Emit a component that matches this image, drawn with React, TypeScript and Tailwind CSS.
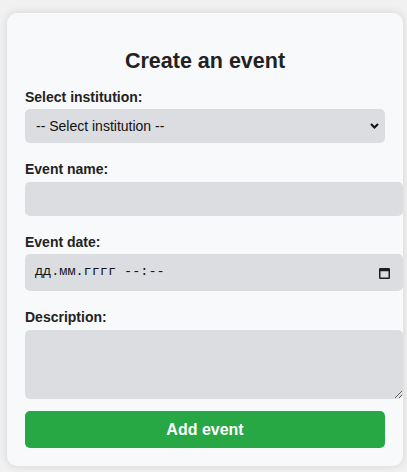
import { useState } from "react";

const CalendarIcon = () => (
  <svg width="11" height="12" viewBox="0 0 11 12" fill="none">
    <rect x="0.75" y="1.75" width="9.5" height="9.5" rx="0.5" stroke="#1f1f1f" strokeWidth="1.5" />
    <rect x="0.75" y="1.75" width="9.5" height="2.5" fill="#1f1f1f" />
  </svg>
);

const Chevron = () => (
  <svg width="9" height="6" viewBox="0 0 9 6" fill="none">
    <path d="M1 1l3.5 3.5L8 1" stroke="#111" strokeWidth="2" />
  </svg>
);

const App = () => {
  const [institution, setInstitution] = useState("");
  const [name, setName] = useState("");
  const [description, setDescription] = useState("");

  return (
    <div className="min-h-screen bg-[#f1f1f2] pt-[13px] pl-[7px] font-['Liberation_Sans',Arial,sans-serif] text-[#222]">
      <form
        className="w-[396px] rounded-[10px] bg-[#f8f9fb] px-[18px] pt-[36px] pb-[18px] shadow-[0_0_10px_rgba(0,0,0,0.12)]"
        onSubmit={(e) => e.preventDefault()}
      >
        <h2 className="mb-[15px] text-center text-[21.5px] leading-[25px] font-bold">Create an event</h2>

        <label className="mb-[4px] block text-[14px] leading-[16px] font-bold">Select institution:</label>
        <div className="relative w-[360px]">
          <select
            value={institution}
            onChange={(e) => setInstitution(e.target.value)}
            className="block h-[34px] w-full appearance-none rounded-[5px] bg-[#dcdde0] pl-[11px] text-[14px] text-[#111] outline-none"
          >
            <option value="">-- Select institution --</option>
          </select>
          <span className="pointer-events-none absolute top-[14px] right-[6px]">
            <Chevron />
          </span>
        </div>

        <label className="mt-[18px] mb-[5px] block text-[14px] leading-[16px] font-bold">Event name:</label>
        <input
          type="text"
          value={name}
          onChange={(e) => setName(e.target.value)}
          className="block h-[34px] w-[378px] rounded-[5px] bg-[#dcdde0] px-[10px] text-[14px] outline-none"
        />

        <label className="mt-[18px] mb-[4px] block text-[14px] leading-[16px] font-bold">Event date:</label>
        <div className="flex h-[37px] w-[378px] items-center justify-between rounded-[5px] bg-[#dcdde0] pr-[13px] pl-[10px]">
          <span className="font-['Liberation_Mono',monospace] text-[13.5px] text-[#111]">дд.мм.гггг --:--</span>
          <CalendarIcon />
        </div>

        <label className="mt-[18px] mb-[5px] block text-[14px] leading-[16px] font-bold">Description:</label>
        <textarea
          value={description}
          onChange={(e) => setDescription(e.target.value)}
          className="block h-[69px] w-[378px] rounded-[5px] bg-[#dcdde0] px-[10px] py-[8px] text-[14px] outline-none"
        />

        <button
          type="submit"
          className="mt-[12px] flex h-[37px] w-[360px] items-center justify-center rounded-[5px] bg-[#28a745] text-[16px] font-bold text-white"
        >
          Add event
        </button>
      </form>
    </div>
  );
};

export default App;
